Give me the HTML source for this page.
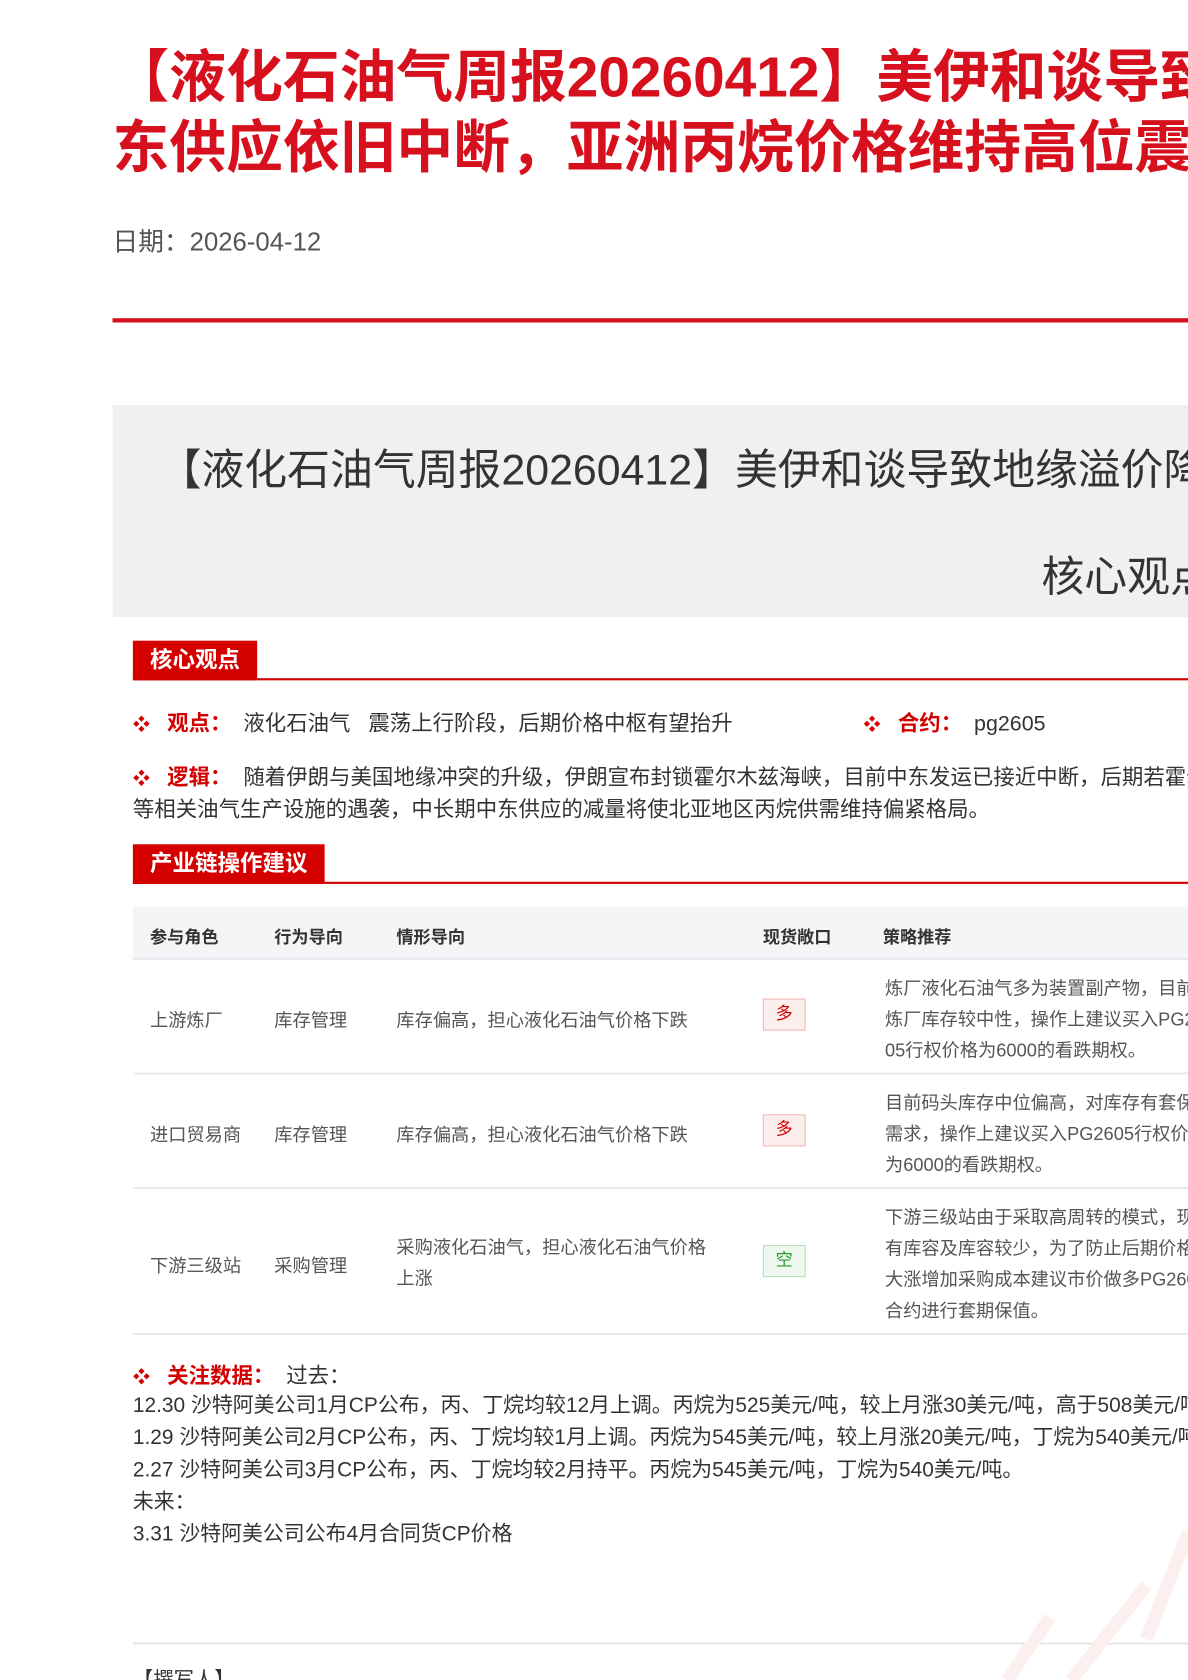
<!DOCTYPE html>
<html><head><meta charset="utf-8"><style>
*{margin:0;padding:0;box-sizing:border-box}
html,body{width:1188px;height:1680px;overflow:hidden;background:#fff}
body{font-family:"Liberation Sans","Noto Sans CJK SC",sans-serif;color:#333;position:relative}
#w{position:absolute;left:0;top:0;width:1109px;height:1568px;transform:scale(1.0714);transform-origin:0 0;overflow:hidden}
.abs{position:absolute;white-space:nowrap}
.t{left:105px;font-size:53px;font-weight:bold;color:#d7101e;line-height:66px}
.tag{position:absolute;left:124px;background:#d40000;color:#fff;font-weight:bold;font-size:21px;height:37px;line-height:38px;padding:0 16px}
.rl{position:absolute;left:124px;right:0;height:2px;background:#d40000}
.dot{color:#d40000;font-size:16px;margin-right:16px}
.red{color:#d40000;font-weight:bold}
.row{position:absolute;left:124px;right:0;border-bottom:2px solid #e8ebef;font-size:17px;color:#555}
.row span{position:absolute;white-space:nowrap}
.bd{position:absolute;width:40px;height:30px;border:1px solid #f5b8b8;background:#fdeeee;color:#d40000;text-align:center;line-height:28px;font-size:16px}
.body{font-size:20px;color:#333}
</style></head><body><div id="w">
<div class="abs t" style="top:40px">【液化石油气周报20260412】美伊和谈导致地缘溢价回落，中</div>
<div class="abs t" style="top:106px">东供应依旧中断，亚洲丙烷价格维持高位震荡</div>
<div class="abs" style="left:105px;top:206px;font-size:24px;color:#555">日期：2026-04-12</div>
<div style="position:absolute;left:105px;right:0;top:297px;height:4px;background:#d7101e"></div>
<div style="position:absolute;left:105px;right:0;top:378px;height:198px;background:#f0f0f0"></div>
<div class="abs" style="left:148px;top:406px;font-size:40px;color:#333">【液化石油气周报20260412】美伊和谈导致地缘溢价降温，中东</div>
<div class="abs" style="left:972px;top:506px;font-size:40px;color:#333">核心观点</div>

<div class="tag" style="top:598px">核心观点</div><div class="rl" style="top:633px"></div>
<div class="abs body" style="left:124px;top:659px"><span class="dot">❖</span><span class="red">观点：</span>&nbsp; 液化石油气&nbsp;&nbsp; 震荡上行阶段，后期价格中枢有望抬升</div>
<div class="abs body" style="left:806px;top:659px"><span class="dot">❖</span><span class="red">合约：</span>&nbsp; pg2605</div>
<div class="abs body" style="left:124px;top:709px"><span class="dot">❖</span><span class="red">逻辑：</span>&nbsp; 随着伊朗与美国地缘冲突的升级，伊朗宣布封锁霍尔木兹海峡，目前中东发运已接近中断，后期若霍尔木兹海峡</div>
<div class="abs body" style="left:124px;top:739px">等相关油气生产设施的遇袭，中长期中东供应的减量将使北亚地区丙烷供需维持偏紧格局。</div>

<div class="tag" style="top:788px">产业链操作建议</div><div class="rl" style="top:823px"></div>

<div class="row" style="top:846px;height:50px;background:#f4f5f7;font-weight:bold;color:#333;font-size:16px"><span style="left:16px;top:15px">参与角色</span><span style="left:132px;top:15px">行为导向</span><span style="left:246px;top:15px">情形导向</span><span style="left:588px;top:15px">现货敞口</span><span style="left:700px;top:15px">策略推荐</span></div>
<div class="row" style="top:896px;height:107px"><span style="left:16px;top:42px">上游炼厂</span><span style="left:132px;top:42px">库存管理</span><span style="left:246px;top:42px">库存偏高，担心液化石油气价格下跌</span><span style="left:702px;top:12px;line-height:29px">炼厂液化石油气多为装置副产物，目前<br>炼厂库存较中性，操作上建议买入PG26<br>05行权价格为6000的看跌期权。</span></div>
<div class="bd" style="top:932px;left:712px">多</div>
<div class="row" style="top:1003px;height:107px"><span style="left:16px;top:42px">进口贸易商</span><span style="left:132px;top:42px">库存管理</span><span style="left:246px;top:42px">库存偏高，担心液化石油气价格下跌</span><span style="left:702px;top:12px;line-height:29px">目前码头库存中位偏高，对库存有套保<br>需求，操作上建议买入PG2605行权价格<br>为6000的看跌期权。</span></div>
<div class="bd" style="top:1040px;left:712px">多</div>
<div class="row" style="top:1110px;height:136px"><span style="left:16px;top:57px">下游三级站</span><span style="left:132px;top:57px">采购管理</span><span style="left:246px;top:40px;line-height:29px">采购液化石油气，担心液化石油气价格<br>上涨</span><span style="left:702px;top:12px;line-height:29px">下游三级站由于采取高周转的模式，现<br>有库容及库容较少，为了防止后期价格<br>大涨增加采购成本建议市价做多PG2605<br>合约进行套期保值。</span></div>
<div class="bd" style="top:1162px;left:712px;border-color:#b8e0b8;background:#eef8ee;color:#2a9a2a">空</div>

<div class="abs body" style="left:124px;top:1268px"><span class="dot">❖</span><span class="red">关注数据：</span>&nbsp; 过去：</div>
<div class="abs" style="left:124px;top:1297px;line-height:30px;font-size:19.5px">12.30 沙特阿美公司1月CP公布，丙、丁烷均较12月上调。丙烷为525美元/吨，较上月涨30美元/吨，高于508美元/吨的市场预期<br>1.29 沙特阿美公司2月CP公布，丙、丁烷均较1月上调。丙烷为545美元/吨，较上月涨20美元/吨，丁烷为540美元/吨<br>2.27 沙特阿美公司3月CP公布，丙、丁烷均较2月持平。丙烷为545美元/吨，丁烷为540美元/吨。<br>未来：<br>3.31 沙特阿美公司公布4月合同货CP价格</div>
<div style="position:absolute;left:124px;right:0;top:1533px;height:2px;background:#e6e6e6"></div>
<div class="abs" style="left:124px;top:1553px;font-size:19px;color:#333">【撰写人】</div>
<svg style="position:absolute;left:820px;top:1420px" width="289" height="148"><path d="M250 110 L289 10 M180 148 L250 60 M120 148 L160 90" stroke="#fcefef" stroke-width="12" fill="none"/></svg>
</div></body></html>
